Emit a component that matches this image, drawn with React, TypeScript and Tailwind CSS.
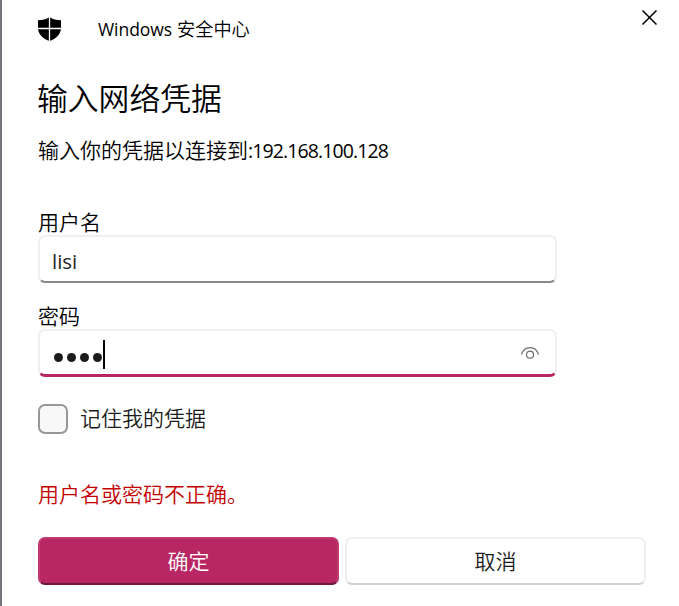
import React from "react";

function Shield() {
  return (
    <svg width="23" height="24" viewBox="0 0 23 24" className="block">
      <path
        d="M11.5 0C8.5 2.2 4.5 3.2 0 3.2V10.5C0 16.8 4 21.3 11.5 24C19 21.3 23 16.8 23 10.5V3.2C18.5 3.2 14.5 2.2 11.5 0Z"
        fill="#000"
      />
      <path d="M11.5 0V24M0 11.5H23" stroke="#fff" strokeWidth="1.3" />
    </svg>
  );
}

function CloseIcon() {
  return (
    <svg width="16" height="16" viewBox="0 0 16 16" className="block">
      <path d="M1.5 0.5L15.5 14.5M15.5 0.5L1.5 14.5" stroke="#000" strokeWidth="1.5" />
    </svg>
  );
}

function RevealIcon() {
  return (
    <svg width="20" height="14" viewBox="0 0 20 14" fill="none" stroke="#6a6a6a" strokeWidth="1.2" className="block">
      <path d="M1.5 8.5C3 3.5 6 1.6 10 1.6S17 3.5 18.5 8.5" />
      <circle cx="10" cy="8.7" r="3.5" />
    </svg>
  );
}

export default function App() {
  return (
    <main className="h-[606px] w-[679px] overflow-hidden border-l-2 border-[#77737a] bg-white pl-9 font-['Open_Sans','Noto_Sans_CJK_SC',sans-serif] text-[21px] font-[350] leading-[30px] text-black">
      <header className="flex h-[60px] items-start justify-between pr-[22px]">
        <div className="flex items-center pt-[14px]">
          <Shield />
          <h1 className="ml-[37px] flex whitespace-pre text-[18.2px] leading-[30px]">
            <span className="w-[79px] text-[17.5px] font-normal tracking-[-0.05px]">Windows </span>
            <span>安全中心</span>
          </h1>
        </div>
        <button aria-label="关闭" className="mt-[10px]"><CloseIcon /></button>
      </header>

      <h2 className="-ml-px mt-4 text-[30.8px] leading-[44px]">输入网络凭据</h2>
      <p className="mt-[15px] flex whitespace-nowrap">
        <span>输入你的凭据以连接到</span>
        <span className="pt-px text-[19.5px] font-normal leading-[29px] tracking-[-0.9px]">:192.168.100.128</span>
      </p>

      <label className="mt-[42px] block">用户名</label>
      <div className="-mt-[2px] h-12 w-[519px] overflow-hidden rounded-[7px] border-2 border-[#efefef] border-b-[#8b898b] px-3 pt-[9px] text-[20.5px] font-normal text-[#222]">
        lisi
      </div>

      <label className="mt-[18px] block">密码</label>
      <div className="-mt-[2px] flex h-12 w-[519px] items-start justify-between rounded-[7px] border-2 border-b-[3px] border-[#efefef] border-b-[#b82764] pl-[13px] pr-[15px]">
        <div className="flex items-start pt-[9px]">
          <div className="flex gap-1 pl-[0.5px] pt-[12.5px]">
            {[0, 1, 2, 3].map((n) => (
              <span key={n} className="size-[9.2px] rounded-full bg-[#1b1b1b]" />
            ))}
          </div>
          <span className="ml-px h-[29px] w-[2px] bg-black" />
        </div>
        <div className="pt-[15px]"><RevealIcon /></div>
      </div>

      <label className="mt-[27px] flex items-center gap-3 text-[#1b1b1b]">
        <span className="size-[30px] rounded-[7px] border-2 border-[#979797] bg-[#f8f8f8]" />
        <span className="-mt-[2px]">记住我的凭据</span>
      </label>

      <p className="mt-[45px] text-[#c40000]">用户名或密码不正确。</p>

      <div className="mt-7 flex gap-[6px]">
        <button className="h-12 w-[301px] rounded-[7px] border-2 border-[#c03b73] border-b-[#6f183d] bg-[#b82764] text-white">确定</button>
        <button className="h-12 w-[301px] rounded-[7px] border-2 border-[#efefef] border-b-[#d3d3d3] bg-white text-[#1b1b1b]">取消</button>
      </div>
    </main>
  );
}
